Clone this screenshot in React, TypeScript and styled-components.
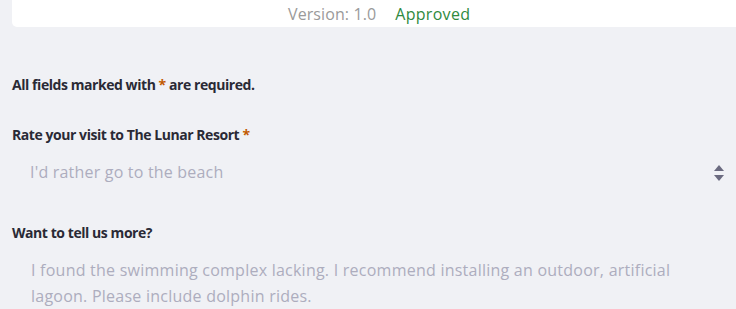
import React from "react";
import styled, { createGlobalStyle } from "styled-components";

const Global = createGlobalStyle`
  html, body { margin: 0; padding: 0; }
  body {
    background: #f0f1f5;
    font-family: "Open Sans", "Noto Sans", sans-serif;
    overflow: hidden;
  }
`;

const Page = styled.div`
  width: 736px;
  height: 309px;
  display: flex;
  flex-direction: column;
`;

const Header = styled.div`
  margin-left: 12px;
  height: 28px;
  background: #ffffff;
  border-bottom-left-radius: 5px;
  display: flex;
  align-items: center;
  padding-left: 276px;
  gap: 19px;
  font-size: 16px;
`;

const Version = styled.span`
  color: #9a9a9a;
  letter-spacing: 0.1px;
`;

const Status = styled.span`
  color: #2f8a3e;
  letter-spacing: 0.3px;
`;

const Form = styled.div`
  padding: 0 12px;
  display: flex;
  flex-direction: column;
`;

const Label = styled.div<{ $top: number }>`
  margin-top: ${(p) => p.$top}px;
  font-size: 14px;
  font-weight: 700;
  color: #2a2a35;
  line-height: 20px;
  letter-spacing: -0.44px;
`;

const Req = styled.span`
  color: #c25a00;
`;

const SelectBox = styled.div`
  margin-top: 13px;
  height: 28px;
  display: flex;
  align-items: center;
  justify-content: space-between;
  padding-left: 18px;
`;

const Placeholder = styled.span`
  font-size: 16px;
  color: #adadbe;
  letter-spacing: 0.2px;
`;

const Arrows = styled.svg`
  width: 10px;
  height: 16px;
  margin-top: 2px;
`;

const TextArea = styled.div`
  margin-top: 14px;
  padding-left: 19px;
  font-size: 16px;
  line-height: 26px;
  color: #adadbe;
  letter-spacing: 0.24px;
  width: 680px;
`;

export default function App() {
  return (
    <Page>
      <Global />
      <Header>
        <Version>Version: 1.0</Version>
        <Status>Approved</Status>
      </Header>
      <Form>
        <Label $top={48}>
          All fields marked with <Req>*</Req> are required.
        </Label>
        <Label $top={30}>
          Rate your visit to The Lunar Resort <Req>*</Req>
        </Label>
        <SelectBox>
          <Placeholder>I'd rather go to the beach</Placeholder>
          <Arrows viewBox="0 0 10 16">
            <path d="M5 0 L10 6 H0 Z" fill="#6b6b80" />
            <path d="M5 16 L10 10 H0 Z" fill="#6b6b80" />
          </Arrows>
        </SelectBox>
        <Label $top={37}>Want to tell us more?</Label>
        <TextArea>
          I found the swimming complex lacking. I recommend installing an outdoor, artificial
          lagoon. Please include dolphin rides.
        </TextArea>
      </Form>
    </Page>
  );
}
